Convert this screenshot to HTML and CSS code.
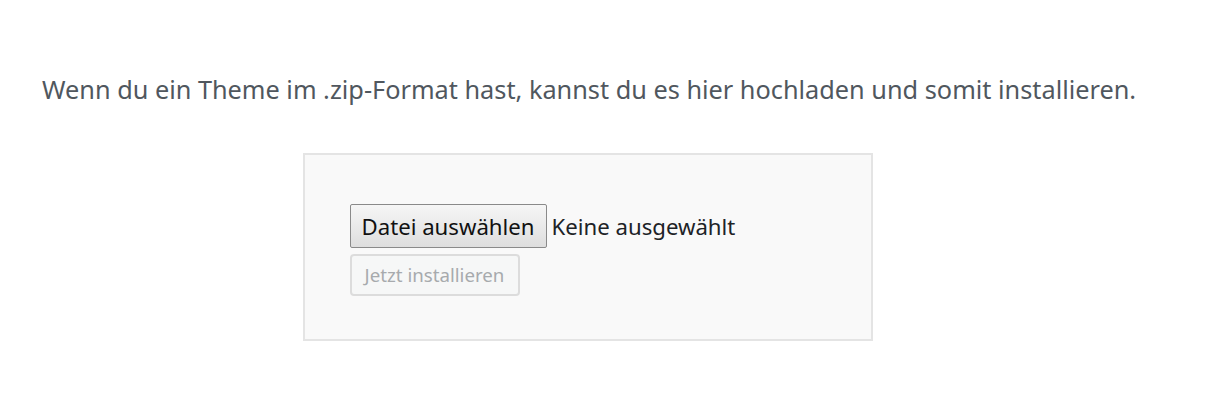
FILE: index.html
```html
<!DOCTYPE html>
<html lang="de">
<head>
    <meta charset="UTF-8">
    <title>Theme hochladen</title>
    <link rel="stylesheet" href="styles.css">
</head>
<body>
    <div class="upload-theme">
        <p class="install-help">Wenn du ein Theme im .zip-Format hast, kannst du es hier hochladen und somit installieren.</p>
        <form class="upload-form">
            <div class="file-row">
                <span class="file-button">Datei auswählen</span>
                <span class="file-name">Keine ausgewählt</span>
            </div>
            <button type="button" class="install-button" disabled>Jetzt installieren</button>
        </form>
    </div>
</body>
</html>
```
FILE: styles.css
```css
* {
    margin: 0;
    padding: 0;
    box-sizing: border-box;
}

body {
    background: #fff;
    font-family: "Noto Sans", "Open Sans", sans-serif;
    color: #50575e;
}

.upload-theme {
    width: 1091px;
    margin-left: 42px;
    padding-top: 71px;
    text-align: center;
}

.install-help {
    text-align: left;
    font-size: 25.3px;
    line-height: 36px;
    white-space: nowrap;
    margin-bottom: 46px;
}

.upload-form {
    display: inline-block;
    width: 570px;
    height: 188px;
    background: #f9f9f9;
    border: 2px solid #e4e4e4;
    padding: 49px 45px 0;
    text-align: left;
}

.file-row {
    display: flex;
    align-items: flex-start;
    gap: 5px;
    height: 44px;
}

.file-button {
    display: inline-block;
    height: 44px;
    width: 197px;
    padding: 2px 11px 0;
    border: 1px solid #8a8a8a;
    border-radius: 2px;
    background: linear-gradient(#f6f6f6, #dedede);
    color: #111;
    font-size: 22.2px;
    line-height: 40px;
    white-space: nowrap;
}

.file-name {
    height: 44px;
    padding-top: 3px;
    color: #1d2327;
    font-size: 22.2px;
    line-height: 40px;
}

.install-button {
    display: block;
    margin-top: 6px;
    width: 170px;
    height: 42px;
    border: 2px solid #dcdcdc;
    border-radius: 4px;
    background: #f6f7f7;
    color: #a7aaad;
    font-family: inherit;
    font-size: 18.7px;
    line-height: 36px;
}
```
